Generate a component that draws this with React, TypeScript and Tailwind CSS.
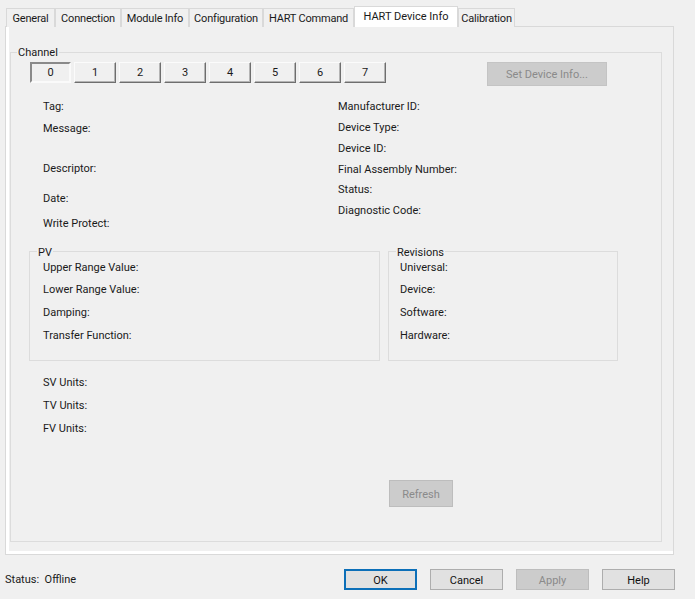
const tabs = [
  { label: "General", w: "w-[49px]" },
  { label: "Connection", w: "w-[66px]" },
  { label: "Module Info", w: "w-[68px]" },
  { label: "Configuration", w: "w-[74px]" },
  { label: "HART Command", w: "w-[91px]" },
]

function Row({ label, className = "" }: { label: string; className?: string }) {
  return <div className={`h-[14px] leading-[16px] whitespace-nowrap ${className}`}>{label}</div>
}

function ChannelButton({ label, active }: { label: string; active?: boolean }) {
  if (active) {
    return (
      <button className="w-[41px] h-[21px] mr-[3px] pt-px bg-[#f0f0f0] border-2 border-t-[#8a8a8a] border-l-[#8a8a8a] border-r-[#fafafa] border-b-[#fafafa] text-center leading-[16px]">
        {label}
      </button>
    )
  }
  return (
    <button className="w-[42px] h-[21px] mr-[3px] pt-px bg-[#f0f0f0] border border-t-[#fbfbfb] border-l-[#fbfbfb] border-r-[#6e6e6e] border-b-[#6e6e6e] shadow-[inset_-1px_-1px_0_#b4b4b4] text-center leading-[18px]">
      {label}
    </button>
  )
}

function DialogButton({ label, disabled, primary }: { label: string; disabled?: boolean; primary?: boolean }) {
  const look = primary
    ? "border-2 border-[#0c6fb8] bg-[#e1e1e1] text-[#111]"
    : disabled
      ? "border border-[#bdbdbd] bg-[#cccccc] text-[#8a8a8a]"
      : "border border-[#adadad] bg-[#e1e1e1] text-[#111]"
  return <button className={`w-[73px] h-[21px] pt-px ${look} text-center leading-none`}>{label}</button>
}

export default function App() {
  return (
    <div
      className="w-[695px] h-[599px] bg-[#f0f0f0] text-[11px] text-[#1a1a1a] overflow-hidden pt-[6px]"
      style={{ fontFamily: 'Roboto, "Liberation Sans", Arial, sans-serif' }}
    >
      {/* tab strip */}
      <div className="flex items-end h-[21px] pl-[6px] relative z-10">
        {tabs.map((t) => (
          <div
            key={t.label}
            className={`${t.w} h-[19px] pt-[3px] border border-b-0 border-[#d9d9d9] bg-[#f0f0f0] flex items-center justify-center whitespace-nowrap tracking-[-0.2px]`}
          >
            {t.label}
          </div>
        ))}
        <div className="w-[104px] h-[21px] bg-white border border-b-0 border-[#d9d9d9] flex items-center justify-center whitespace-nowrap">
          HART Device Info
        </div>
        <div className="w-[57px] h-[19px] pt-[3px] border border-b-0 border-[#d9d9d9] bg-[#f0f0f0] flex items-center justify-center whitespace-nowrap tracking-[-0.2px]">
          Calibration
        </div>
      </div>

      {/* page */}
      <div className="ml-[5px] w-[669px] h-[529px] -mt-px border border-[#d9d9d9] bg-[#f0f0f0] shadow-[inset_0_-3px_0_#fff,inset_3px_0_0_#fff] pt-[25px] pl-[4px]">
        <div className="relative w-[652px] h-[490px] border border-[#dcdcdc] pt-[9px] pl-[19px]">
          <span className="absolute left-[6px] -top-[7px] bg-[#f0f0f0] px-px leading-[14px]">Channel</span>

          <div className="flex items-start">
            {["0", "1", "2", "3", "4", "5", "6", "7"].map((c, i) => (
              <ChannelButton key={c} label={c} active={i === 0} />
            ))}
            <button className="ml-[98px] w-[120px] h-[24px] pt-px bg-[#cccccc] border border-[#c4c4c4] text-[#8a8a8a] text-center leading-none">
              Set Device Info...
            </button>
          </div>

          <div className="flex mt-[13px] pl-[13px]">
            <div className="w-[295px]">
              <Row label="Tag:" />
              <Row label="Message:" className="mt-[8px]" />
              <Row label="Descriptor:" className="mt-[26px]" />
              <Row label="Date:" className="mt-[16px]" />
              <Row label="Write Protect:" className="mt-[11px]" />
            </div>
            <div>
              <Row label="Manufacturer ID:" />
              <Row label="Device Type:" className="mt-[7px]" />
              <Row label="Device ID:" className="mt-[7px]" />
              <Row label="Final Assembly Number:" className="mt-[7px]" />
              <Row label="Status:" className="mt-[6px]" />
              <Row label="Diagnostic Code:" className="mt-[7px]" />
            </div>
          </div>

          <div className="flex mt-[21px] -ml-px">
            <div className="relative w-[351px] h-[110px] border border-[#dcdcdc] pl-[13px] pt-[8px]">
              <span className="absolute left-[7px] -top-[6px] bg-[#f0f0f0] px-px leading-[14px]">PV</span>
              <Row label="Upper Range Value:" />
              <Row label="Lower Range Value:" className="mt-[8px]" />
              <Row label="Damping:" className="mt-[9px]" />
              <Row label="Transfer Function:" className="mt-[9px]" />
            </div>
            <div className="relative ml-[8px] w-[230px] h-[110px] border border-[#dcdcdc] pl-[11px] pt-[8px]">
              <span className="absolute left-[7px] -top-[6px] bg-[#f0f0f0] px-px leading-[14px]">Revisions</span>
              <Row label="Universal:" />
              <Row label="Device:" className="mt-[8px]" />
              <Row label="Software:" className="mt-[9px]" />
              <Row label="Hardware:" className="mt-[9px]" />
            </div>
          </div>

          <div className="pl-[13px] mt-[14px]">
            <Row label="SV Units:" />
            <Row label="TV Units:" className="mt-[9px]" />
            <Row label="FV Units:" className="mt-[9px]" />
          </div>

          <button className="block ml-[359px] mt-[45px] w-[64px] h-[27px] pt-px bg-[#cccccc] border border-[#bdbdbd] text-[#8a8a8a] text-center leading-none">
            Refresh
          </button>
        </div>
      </div>

      {/* footer */}
      <div className="flex items-center mt-[14px] pl-[5px] h-[21px]">
        <div className="w-[339px] whitespace-nowrap pt-[2px]">Status:&nbsp; Offline</div>
        <div className="flex gap-[13px]">
          <DialogButton label="OK" primary />
          <DialogButton label="Cancel" />
          <DialogButton label="Apply" disabled />
          <DialogButton label="Help" />
        </div>
      </div>
    </div>
  )
}
